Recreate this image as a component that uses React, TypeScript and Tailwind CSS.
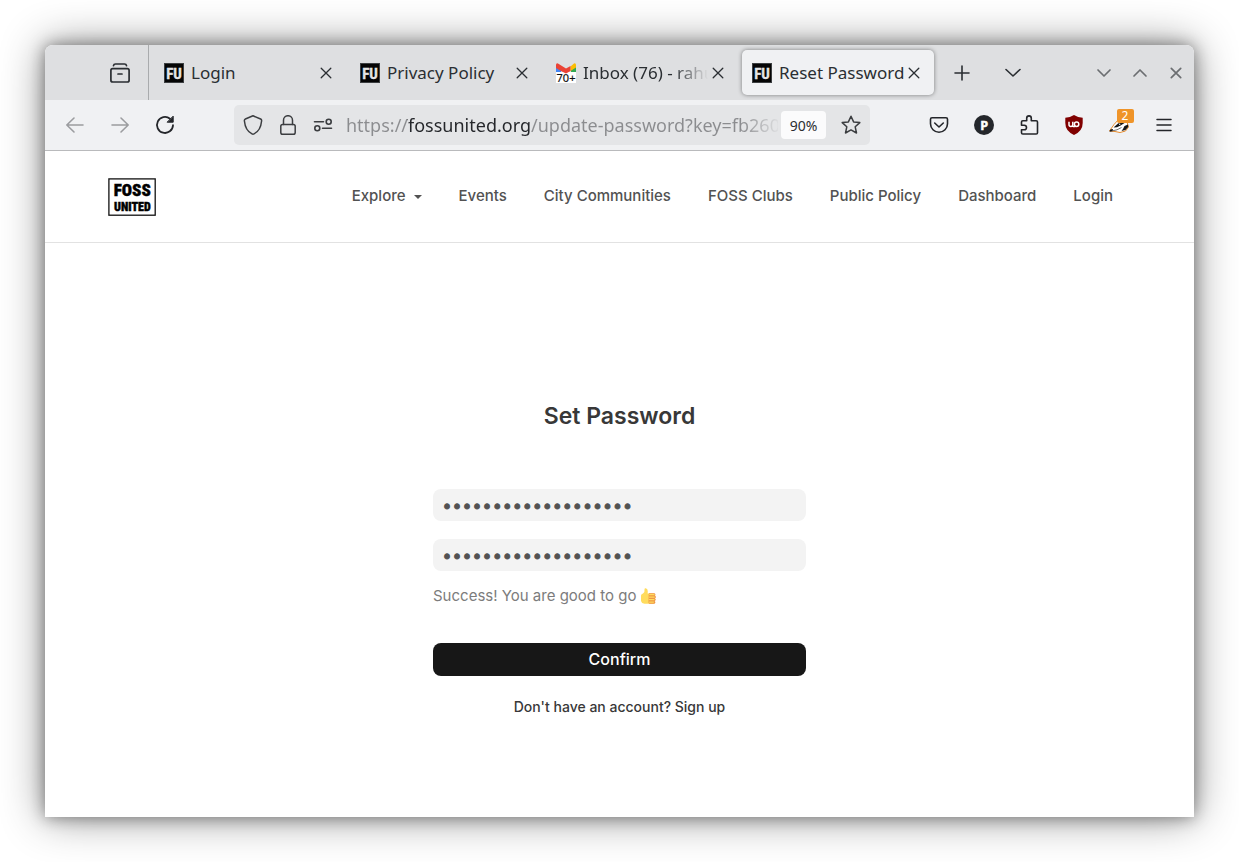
import { useState } from "react";
import type { ReactNode } from "react";

type TabInfo = { title: string; icon: "fu" | "mail"; active?: boolean };

const tabs: TabInfo[] = [
  { title: "Login", icon: "fu" },
  { title: "Privacy Policy", icon: "fu" },
  { title: "Inbox (76) - rahu", icon: "mail" },
  { title: "Reset Password", icon: "fu", active: true },
];

const links = ["Events", "City Communities", "FOSS Clubs", "Public Policy", "Dashboard", "Login"];

function FuIcon() {
  return (
    <svg className="size-5 shrink-0" viewBox="0 0 20 20" aria-hidden="true">
      <rect width="20" height="20" fill="#3c3f41" />
      <rect x="1" y="1" width="18" height="18" fill="#050505" />
      <text x="10" y="15.500" textAnchor="middle" fontFamily="'Roboto Condensed', Roboto, sans-serif" fontWeight="700" fontSize="15" fill="#e4e4e4" stroke="#e4e4e4" strokeWidth="0.300">FU</text>
    </svg>
  );
}

function MailIcon() {
  return (
    <svg className="size-5 shrink-0" viewBox="0 0 20 20" aria-hidden="true">
      <rect y="9" width="20" height="11" fill="#fff" />
      <path d="M0 3l5 4V9H0z" fill="#4285f4" />
      <path d="M20 3l-5 4V9H20z" fill="#34a853" />
      <path d="M14.500 3.500L18 .4q2-.6 2 1.700V4.500L14.500 8z" fill="#fbbc04" />
      <path d="M0 5V2.100Q0-.2 2 .4L10 5.500l4.500-2.500V8L10 10.500 5 8z" fill="#ea4335" />
      <text x="10" y="18.500" textAnchor="middle" fontFamily="'Noto Sans', sans-serif" fontSize="11" fill="#111" stroke="#111" strokeWidth="0.200">70+</text>
    </svg>
  );
}

function Icon({ children, size = "size-5", stroke = 1.6 }: { children: ReactNode; size?: string; stroke?: number }) {
  return (
    <svg className={`${size} shrink-0`} viewBox="0 0 20 20" fill="none" stroke="currentColor" strokeWidth={stroke} strokeLinecap="round" strokeLinejoin="round" aria-hidden="true">
      {children}
    </svg>
  );
}

function ToolButton({ label, children, dim = false }: { label: string; children: ReactNode; dim?: boolean }) {
  return (
    <button type="button" aria-label={label} disabled={dim} className={`flex h-10 w-[45px] items-center justify-center ${dim ? "text-[#9b9c9f]" : "text-[#24262a]"}`}>
      {children}
    </button>
  );
}

function Tab({ tab }: { tab: TabInfo }) {
  return (
    <div className="flex max-w-[196px] min-w-0 flex-1 px-[2px] py-[5px]">
      <div className={`flex min-w-0 flex-1 items-center rounded-[5px] px-[10px] ${tab.active ? "bg-[#f0f1f3] shadow-[0_0_4px_rgba(0,0,0,0.45)]" : ""}`}>
        <button type="button" className="flex min-w-0 flex-1 items-center gap-[7px]">
          {tab.icon === "fu" ? <FuIcon /> : <MailIcon />}
          <span className={`min-w-0 flex-1 overflow-hidden text-left whitespace-nowrap ${tab.icon === "mail" ? "[mask-image:linear-gradient(to_right,#000_72%,transparent_100%)]" : ""}`}>
            {tab.title}
          </span>
        </button>
        <button type="button" aria-label={`Close ${tab.title}`} className="flex size-5 shrink-0 items-center justify-center">
          <Icon stroke={1.3}><path d="M5.200 5.200l9.600 9.600M14.800 5.200l-9.600 9.600" /></Icon>
        </button>
      </div>
    </div>
  );
}

function TabBar() {
  return (
    <div className="flex h-[55px] rounded-t-lg bg-[#dedfe1] font-['Noto_Sans',sans-serif] text-[17px] text-[#2a2e32]">
      <div className="flex w-[104px] shrink-0 items-center justify-end border-r border-[#a9abad] pr-[6px]">
        <button type="button" aria-label="Recent browsing" className="flex w-[45px] items-center justify-center">
          <Icon stroke={1.7}>
            <rect x=".9" y="5.700" width="18.200" height="13.300" rx="1.800" />
            <path d="M3.500 2.700Q3.800 1 5.500 1h9q1.700 0 2 1.700M8 11h4" />
          </Icon>
        </button>
      </div>
      <div className="flex min-w-0 flex-1 pl-[3px]">
        {tabs.map((tab) => <Tab key={tab.title} tab={tab} />)}
        <button type="button" aria-label="New tab" className="flex w-[52px] items-center justify-center">
          <Icon><path d="M10 3v14M3 10h14" /></Icon>
        </button>
        <button type="button" aria-label="List all tabs" className="flex w-[50px] items-center justify-center">
          <Icon><path d="M3 6.500l7 6.500 7-6.500" /></Icon>
        </button>
      </div>
      <div className="flex text-[#6b6e71]">
        <button type="button" aria-label="Minimize" className="flex w-9 items-center justify-center">
          <Icon stroke={1.7}><path d="M4 7l6 6 6-6" /></Icon>
        </button>
        <button type="button" aria-label="Maximize" className="flex w-9 items-center justify-center">
          <Icon stroke={1.7}><path d="M4 13l6-6 6 6" /></Icon>
        </button>
        <button type="button" aria-label="Close window" className="flex w-9 items-center justify-center">
          <Icon stroke={1.7}><path d="M5.300 5.300l9.400 9.400M14.700 5.300l-9.400 9.400" /></Icon>
        </button>
      </div>
    </div>
  );
}

function AddressBar() {
  return (
    <div className="mr-[46px] ml-[47px] flex h-10 min-w-0 flex-1 items-center rounded-[5px] bg-[#e4e5e7] pl-px font-['Noto_Sans',sans-serif] text-[#3b3d40]">
      <button type="button" aria-label="Tracking protection" className="flex w-[35px] shrink-0 items-center justify-center">
        <Icon stroke={1.5}><path d="M10 .8L17.600 4Q18.800 4.500 18.600 6C18 12 15 17 11 18.900Q10 19.400 9 18.900C5 17 2 12 1.400 6Q1.200 4.500 2.400 4z" /></Icon>
      </button>
      <button type="button" aria-label="Connection is secure" className="flex w-[35px] shrink-0 items-center justify-center">
        <Icon stroke={1.5}><rect x="2.800" y="9.500" width="14.400" height="9.700" rx="1.800" /><path d="M5.500 9.500V5.200a4.500 4.500 0 0 1 9 0v4.300" /></Icon>
      </button>
      <button type="button" aria-label="Site permissions" className="flex w-[35px] shrink-0 items-center justify-center">
        <Icon stroke={1.6}><circle cx="15.700" cy="6.800" r="2.500" /><circle cx="4.300" cy="13.200" r="2.500" /><path d="M1.500 6.800h9M9.500 13.200h9" /></Icon>
      </button>
      <input
        type="text"
        aria-label="Address"
        defaultValue="https://fossunited.org/update-password?key=fb2605d1c7"
        className="ml-[6px] h-8 min-w-0 flex-1 bg-[linear-gradient(to_right,#8b8c8f_61px,#24262a_61px,#24262a_184px,#8b8c8f_184px,#8b8c8f_395px,transparent_435px)] bg-clip-text text-[18px] text-transparent outline-none"
      />
      <button type="button" className="ml-[3px] h-7 w-[45px] shrink-0 rounded-[4px] bg-[#fbfbfc] text-[14px] text-[#2b2d31]">90%</button>
      <button type="button" aria-label="Bookmark this page" className="ml-[6px] flex w-[38px] shrink-0 items-center justify-center">
        <Icon stroke={1.5}><path d="M10 1.200l2.600 5.700 6.200.7-4.600 4.200 1.300 6.200-5.500-3.100-5.500 3.100 1.300-6.200L1.200 7.600l6.200-.7z" /></Icon>
      </button>
    </div>
  );
}

function Toolbar() {
  return (
    <div className="flex h-[51px] items-center border-b border-[#b9babc] bg-[#f0f1f3] pr-2 pl-[7px]">
      <ToolButton label="Back" dim><Icon><path d="M18 10H1.800M9 3l-7.200 7L9 17" /></Icon></ToolButton>
      <ToolButton label="Forward" dim><Icon><path d="M2 10h16.200M11 3l7.200 7-7.200 7" /></Icon></ToolButton>
      <ToolButton label="Reload">
        <Icon stroke={1.8}><path d="M18 10.200a8 8 0 1 1-3-6.500" /><path d="M18.200 1.500v5.700h-5.700z" fill="currentColor" strokeWidth="1" /></Icon>
      </ToolButton>
      <AddressBar />
      <ToolButton label="Save to Pocket">
        <Icon><path d="M3 2.800h14q1.500 0 1.500 1.500v4.500a8.500 8.500 0 0 1-17 0V4.300q0-1.500 1.500-1.500zM5.700 8l4.300 4 4.300-4" /></Icon>
      </ToolButton>
      <ToolButton label="Profile">
        <svg className="size-5" viewBox="0 0 20 20" aria-hidden="true">
          <circle cx="10" cy="10" r="10" fill="#24272b" />
          <text x="10.300" y="14.500" textAnchor="middle" fontFamily="'Open Sans', sans-serif" fontWeight="700" fontSize="12.500" fill="#fff" stroke="#fff" strokeWidth=".5">P</text>
        </svg>
      </ToolButton>
      <ToolButton label="Extensions">
        <Icon><path d="M7.700 5.800V3.200a2.300 2.300 0 0 1 4.600 0v2.600h4.900q1.300 0 1.300 1.300v10.600q0 1.300-1.300 1.300H3.800q-1.300 0-1.300-1.300v-2.900h2.700a2.300 2.300 0 0 0 0-4.600H2.500V7.100q0-1.300 1.300-1.300z" /></Icon>
      </ToolButton>
      <ToolButton label="Content blocker">
        <svg className="size-5" viewBox="0 0 20 20" aria-hidden="true">
          <path d="M10 0Q14 2.700 18.700 2.700V8q0 8-8.700 12Q1.300 16 1.300 8V2.700Q6 2.700 10 0z" fill="#800000" />
          <path d="M5 6.800v3q0 1.700 1.900 1.700t1.900-1.700v-3M8.800 11.500h2.600" fill="none" stroke="#fff" strokeWidth="1.500" />
          <circle cx="12.600" cy="9.300" r="2.200" fill="none" stroke="#fff" strokeWidth="1.500" />
        </svg>
      </ToolButton>
      <ToolButton label="Tracker blocker, 2 blocked">
        <span className="relative flex">
          <svg className="size-5" viewBox="0 0 20 20" aria-hidden="true">
            <path d="M.5 16L5 9.500l5-5.500 8 3 1.500 5-3 4-5.500 1.500-5-1z" fill="#fff" stroke="#e58a2c" strokeWidth="1" strokeLinejoin="round" />
            <path d="M.6 16.800q-.2-1.800 1.400-2.600l2-.2-.5 2.300z" fill="#161616" />
            <path d="M4.500 12.500L9 8.500l3.500-1.500 3 1-3.500 2.200-4 2z" fill="#161616" />
            <path d="M3.500 15.800l4.500-1 4.500-2.300" fill="none" stroke="#333" strokeWidth=".7" />
            <path d="M15.500 11l3.500-1.500.2 2.500-2.700 3-4 1 1.500-2z" fill="#161616" />
            <circle cx="10.700" cy="9.200" r=".7" fill="#fff" />
          </svg>
          <span className="absolute -top-[6px] left-[8px] flex h-[14px] w-[17px] items-center justify-center rounded-[2px] bg-[#ef9429] font-['Noto_Sans',sans-serif] text-[12px] text-white">2</span>
        </span>
      </ToolButton>
      <ToolButton label="Open menu"><Icon stroke={1.5}><path d="M3 4.500h14M3 10h14M3 15.500h14" /></Icon></ToolButton>
    </div>
  );
}

function SiteHeader() {
  return (
    <header className="flex h-[92px] items-center justify-between border-b border-[#e2e2e2] pr-[81px] pl-[63px] text-[15px] font-medium text-[#525252]">
      <a href="#home" aria-label="FOSS United">
        <svg className="h-[38px] w-12" viewBox="0 0 48 38" aria-hidden="true">
          <rect x=".9" y=".9" width="46.300" height="36.300" fill="#fff" stroke="#111" strokeWidth="1.300" />
          <g fontFamily="'Roboto Condensed', Roboto, sans-serif" fontWeight="900" fill="#000" stroke="#000" strokeWidth=".4" textAnchor="middle">
            <text x="24.300" y="18" fontSize="17">FOSS</text>
            <text x="24.300" y="32.500" fontSize="12">UNITED</text>
          </g>
        </svg>
      </a>
      <nav className="flex items-center gap-[37px] whitespace-nowrap">
        <button type="button" className="flex items-center gap-2">
          Explore
          <svg className="h-1 w-2" viewBox="0 0 8 4" aria-hidden="true"><path d="M0 0h8L4 4z" fill="currentColor" /></svg>
        </button>
        {links.map((link) => <a key={link} href="#page">{link}</a>)}
      </nav>
    </header>
  );
}

function Thumb() {
  return (
    <svg role="img" aria-label="Thumbs up" className="h-4 w-4" viewBox="0 0 16 16">
      <path d="M1 7.500Q1.200 6 3 5.500 5 4.500 4.500 1.500 4.500 0 5.800.2q2 .5 2 3.300L7.600 5.500h6.200q1.400.2 1.200 1.700l-.4 7.300q-.2 1.300-1.600 1.300H4.500Q1.500 15.500 1 13z" fill="#ffdc5d" />
      <path d="M9 5.300h5a1.300 1.300 0 0 1 .6 2.500 1.300 1.300 0 0 1 0 2.600 1.300 1.300 0 0 1-.3 2.600 1.300 1.300 0 0 1-.7 2.700H9.500q-1-.2-1-1.400l.2-7.400q0-1.200.3-1.600z" fill="#ef9645" />
      <path d="M9.700 6.700h4.300M9.500 9.100h4.700M9.400 11.600h4.500M9.500 14.100h3.900" stroke="#ffdc5d" strokeWidth="1.300" strokeLinecap="round" />
    </svg>
  );
}

function PasswordForm() {
  const [password, setPassword] = useState("abcdefghijklmnopqrs");
  const [confirmation, setConfirmation] = useState("abcdefghijklmnopqrs");
  const field = "h-8 w-full rounded-lg bg-[#f3f3f3] px-[9px] pt-[4px] font-['DejaVu_Sans',sans-serif] text-[17px] text-[#525252] outline-none [-webkit-text-stroke:1px_#525252]";
  return (
    <main className="flex flex-col items-center px-6 pt-[157px] pb-[100px]">
      <h1 className="text-[23px] leading-8 font-semibold text-[#383838]">Set Password</h1>
      <form className="mt-[57px] flex w-full max-w-[373px] flex-col" onSubmit={(e) => e.preventDefault()}>
        <input type="password" aria-label="New password" value={password} onChange={(e) => setPassword(e.target.value)} className={field} />
        <input type="password" aria-label="Confirm password" value={confirmation} onChange={(e) => setConfirmation(e.target.value)} className={`${field} mt-[18px]`} />
        <p className="mt-[13px] flex items-center gap-1 text-[15px] leading-6 text-[#7c7c7c]">Success! You are good to go <Thumb /></p>
        <button type="submit" className="mt-[35px] h-[33px] rounded-lg bg-[#171717] pb-[2px] text-[16px] font-medium text-white">Confirm</button>
      </form>
      <a href="#signup" className="mt-[21px] text-[14px] leading-5 font-medium text-[#383838]">Don't have an account? Sign up</a>
    </main>
  );
}

export default function App() {
  return (
    <div className="min-h-screen bg-white p-[45px] font-[Inter,sans-serif]">
      <div className="rounded-t-lg bg-white shadow-[0_0_44px_rgba(0,0,0,0.45),0_0_16px_rgba(0,0,0,0.4)]">
        <TabBar />
        <Toolbar />
        <SiteHeader />
        <PasswordForm />
      </div>
    </div>
  );
}
